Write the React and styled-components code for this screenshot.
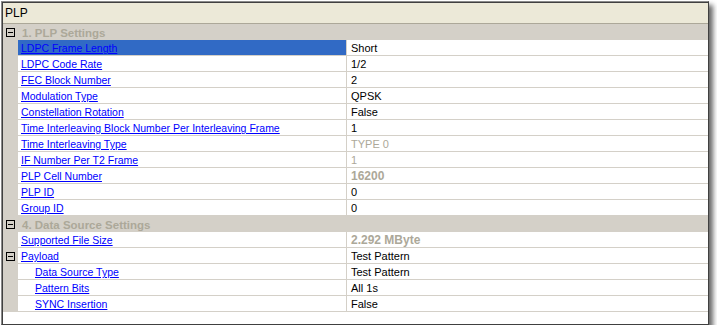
import React from "react";
import styled, { createGlobalStyle } from "styled-components";

const GlobalStyle = createGlobalStyle`
  html, body {
    margin: 0;
    padding: 0;
    background: #ffffff;
  }
  body {
    font-family: "Liberation Sans", Arial, sans-serif;
    font-size: 11px;
  }
`;

const rows = [
    { type: "cat", label: "1. PLP Settings" },
    { name: "LDPC Frame Length", value: "Short", selected: true },
    { name: "LDPC Code Rate", value: "1/2" },
    { name: "FEC Block Number", value: "2" },
    { name: "Modulation Type", value: "QPSK" },
    { name: "Constellation Rotation", value: "False" },
    { name: "Time Interleaving Block Number Per Interleaving Frame", value: "1" },
    { name: "Time Interleaving Type", value: "TYPE 0", muted: true },
    { name: "IF Number Per T2 Frame", value: "1", muted: true },
    { name: "PLP Cell Number", value: "16200", muted: true, bold: true },
    { name: "PLP ID", value: "0" },
    { name: "Group ID", value: "0" },
    { type: "cat", label: "4. Data Source Settings" },
    { name: "Supported File Size", value: "2.292 MByte", muted: true, bold: true },
    { name: "Payload", value: "Test Pattern", expander: true },
    { name: "Data Source Type", value: "Test Pattern", child: true },
    { name: "Pattern Bits", value: "All 1s", child: true },
    { name: "SYNC Insertion", value: "False", child: true },
];

export default function App() {
    return (
        <>
            <GlobalStyle />
            <Window>
                <Inner>
                    <Header>PLP</Header>
                    <Grid>
                        {rows.map((r, i) =>
                            r.type === "cat" ? (
                                <CategoryRow key={i}>
                                    <Gutter>
                                        <Minus />
                                    </Gutter>
                                    <CategoryLabel>{r.label}</CategoryLabel>
                                </CategoryRow>
                            ) : (
                                <PropRow key={i}>
                                    <Gutter>{r.expander && <Minus />}</Gutter>
                                    <NameCell $selected={r.selected} $child={r.child}>
                                        <NameLink>{r.name}</NameLink>
                                    </NameCell>
                                    <ValueCell $muted={r.muted} $bold={r.bold}>
                                        {r.value}
                                    </ValueCell>
                                </PropRow>
                            )
                        )}
                    </Grid>
                </Inner>
            </Window>
        </>
    );
}

function Minus() {
    return (
        <Box>
            <svg width="9" height="9" viewBox="0 0 9 9">
                <rect x="0.5" y="0.5" width="8" height="8" fill="none" stroke="#000" />
                <line x1="2" y1="4.5" x2="7" y2="4.5" stroke="#000" />
            </svg>
        </Box>
    );
}

const Window = styled.div`
    width: 709px;
    height: 325px;
    box-sizing: border-box;
    padding: 1px 0 0 1px;
    background: #ffffff;
    box-shadow: 4px 5px 5px rgba(0, 0, 0, 0.6);
`;

const Inner = styled.div`
    height: 100%;
    box-sizing: border-box;
    border-left: 1px solid #8a8a8a;
    border-top: 1px solid #8a8a8a;
    border-right: 1px solid #404040;
    border-bottom: 1px solid #404040;
    padding: 1px 0 0 1px;
    background: #ffffff;
    box-shadow: inset 1px 1px 0 #404040;
    display: flex;
    flex-direction: column;
`;

const Header = styled.div`
    height: 20px;
    line-height: 20px;
    padding-left: 2px;
    background: #ece9d8;
    border-bottom: 1px solid #aca899;
    color: #000000;
    font-size: 12px;
`;

const Grid = styled.div`
    display: flex;
    flex-direction: column;
`;

const CategoryRow = styled.div`
    display: flex;
    height: 16px;
    background: #d4d0c8;
`;

const CategoryLabel = styled.div`
    padding: 2px 0 0 4px;
    line-height: 14px;
    font-weight: bold;
    color: #aca899;
    font-size: 11.5px;
`;

const PropRow = styled.div`
    display: grid;
    grid-template-columns: 15px 329px 1fr;
    height: 16px;
`;

const Gutter = styled.div`
    width: 15px;
    background: #d4d0c8;
    display: flex;
    align-items: center;
    justify-content: center;
    padding-right: 1px;
    box-sizing: border-box;
`;

const Box = styled.span`
    display: flex;
    width: 9px;
    height: 9px;
`;

const NameCell = styled.div`
    box-sizing: border-box;
    border-bottom: 1px solid #d4d0c8;
    border-right: 1px solid #d4d0c8;
    padding: 2px 0 0 ${(p) => (p.$child ? 17 : 3)}px;
    line-height: 13px;
    font-size: 10.5px;
    background: ${(p) => (p.$selected ? "#316ac5" : "#ffffff")};
    white-space: nowrap;
    overflow: hidden;
`;

const NameLink = styled.span`
    color: #0000ff;
    text-decoration: underline;
`;

const ValueCell = styled.div`
    box-sizing: border-box;
    border-bottom: 1px solid #d4d0c8;
    padding: 2px 0 0 4px;
    line-height: 13px;
    color: ${(p) => (p.$muted ? "#aca899" : "#000000")};
    font-weight: ${(p) => (p.$bold ? "bold" : "normal")};
    font-size: ${(p) => (p.$bold ? "12px" : "11px")};
`;
